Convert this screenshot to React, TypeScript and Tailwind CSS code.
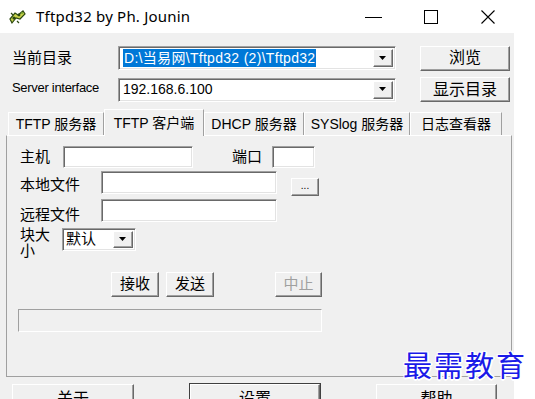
import React from 'react';

const sunken =
  'bg-white border border-t-[#a0a0a0] border-l-[#a0a0a0] border-b-white border-r-white shadow-[inset_1px_1px_0_#696969,inset_-1px_-1px_0_#e3e3e3]';
const raised =
  'bg-[#f0f0f0] border border-t-white border-l-white border-b-[#696969] border-r-[#696969] shadow-[inset_-1px_-1px_0_#a0a0a0]';

function Arrow() {
  return (
    <div className={`${raised} w-[20px] h-full flex items-center justify-center shrink-0`}>
      <svg width="8" height="5" viewBox="0 0 8 5">
        <path d="M0 0h7L3.5 4z" fill="#000" />
      </svg>
    </div>
  );
}

function Combo({ children, width }: { children: React.ReactNode; width: string }) {
  return (
    <div className={`${sunken} ${width} h-[24px] flex items-stretch p-[2px]`}>
      <div className="flex-1 flex items-center pl-[2px] text-[14px] overflow-hidden whitespace-nowrap">
        {children}
      </div>
      <Arrow />
    </div>
  );
}

function Btn({ children, className = '', disabled = false }: { children: React.ReactNode; className?: string; disabled?: boolean }) {
  return (
    <div
      className={`${raised} flex justify-center shrink-0 ${disabled ? 'text-[#a0a0a0]' : 'text-black'} ${className}`}
    >
      {children}
    </div>
  );
}

function Tab({ label, w, active = false }: { label: string; w: string; active?: boolean }) {
  return (
    <div
      className={`${w} flex items-center justify-center border-l border-t border-l-white border-t-white border-r border-r-[#a0a0a0] text-[14px] ${
        active ? 'h-[27px] bg-[#f0f0f0] -mb-px relative z-10 border-b-0' : 'h-[23px]'
      }`}
    >
      {label}
    </div>
  );
}

function TitleIcon() {
  return (
    <svg width="18" height="16" viewBox="0 0 18 16">
      <path d="M2 10 L7 4 L10 6 L15 2 L17 5 L12 10 L8 9 L4 14 Z" fill="#c9d44a" stroke="#2d4a12" strokeWidth="1.2" />
      <circle cx="6" cy="9" r="1.6" fill="#2d4a12" />
      <circle cx="11" cy="6" r="1.4" fill="#2d4a12" />
      <circle cx="14" cy="4" r="1" fill="#6fa02a" />
      <path d="M3 4 L5 6 M9 12 L11 14" stroke="#2d4a12" strokeWidth="1.2" />
    </svg>
  );
}

export default function App() {
  return (
    <div className="w-[535px] h-[399px] bg-white relative overflow-hidden font-['Liberation_Sans','Noto_Sans_CJK_SC',sans-serif] text-black">
      {/* title bar */}
      <div className="h-[33px] flex items-center">
        <div className="ml-[7px] w-[20px] flex justify-center">
          <TitleIcon />
        </div>
        <span className="ml-[9px] text-[15px] tracking-[0.2px] font-['Noto_Sans',sans-serif]">Tftpd32 by Ph. Jounin</span>
        <div className="ml-auto flex items-center mr-[40px]">
          <svg width="18" height="14" viewBox="0 0 18 14" className="mr-[41px]">
            <path d="M0 7.5h17" stroke="#000" strokeWidth="1" />
          </svg>
          <svg width="14" height="14" viewBox="0 0 14 14" className="mr-[43px]">
            <rect x="0.5" y="0.5" width="13" height="13" fill="none" stroke="#000" />
          </svg>
          <svg width="14" height="14" viewBox="0 0 14 14">
            <path d="M0.5 0.5L13.5 13.5M13.5 0.5L0.5 13.5" stroke="#000" strokeWidth="1.1" />
          </svg>
        </div>
      </div>

      {/* body */}
      <div className="w-[514px] h-[366px] bg-[#f0f0f0] flex flex-col [&>*]:shrink-0">
        <div className="flex items-center mt-[13px] pl-[12px] h-[24px]">
          <span className="w-[106px] text-[15px]">当前目录</span>
          <Combo width="w-[278px]">
            <span className="bg-[#0078d7] text-white px-px tracking-[0.3px]">D:\当易网\Tftpd32 (2)\Tftpd32</span>
          </Combo>
          <Btn className="ml-[24px] w-[90px] h-[25px] text-[16px] items-center">浏览</Btn>
        </div>
        <div className="flex items-center mt-[7px] pl-[12px] h-[25px]">
          <span className="w-[106px] text-[13px] tracking-[-0.3px] -mt-[4px]">Server interface</span>
          <Combo width="w-[278px]">192.168.6.100</Combo>
          <Btn className="ml-[24px] w-[90px] h-[25px] text-[16px] items-center">显示目录</Btn>
        </div>

        {/* tabs */}
        <div className="flex items-end ml-[8px] mt-[6px] h-[27px]">
          <Tab label="TFTP 服务器" w="w-[96px]" />
          <Tab label="TFTP 客户端" w="w-[100px]" active />
          <Tab label="DHCP 服务器" w="w-[100px]" />
          <Tab label="SYSlog 服务器" w="w-[106px]" />
          <Tab label="日志查看器" w="w-[92px]" />
        </div>

        {/* panel */}
        <div className="ml-[6px] w-[506px] h-[242px] border border-t-white border-l-[#a0a0a0] border-r-[#a0a0a0] border-b-[#a0a0a0] flex flex-col text-[15px] [&>*]:shrink-0">
          <div className="flex items-center mt-[10px] pl-[13px] h-[22px]">
            <span className="w-[43px]">主机</span>
            <div className={`${sunken} w-[130px] h-[22px]`} />
            <span className="ml-[39px] w-[40px]">端口</span>
            <div className={`${sunken} w-[43px] h-[22px]`} />
          </div>
          <div className="flex items-start mt-[3px] pl-[13px] h-[24px]">
            <span className="w-[81px] mt-[3px]">本地文件</span>
            <div className={`${sunken} w-[176px] h-[23px]`} />
            <Btn className="ml-[14px] mt-[7px] w-[28px] h-[18px] text-[10px] leading-none items-center pb-[2px]">...</Btn>
          </div>
          <div className="flex items-start mt-[4px] pl-[13px] h-[23px]">
            <span className="w-[81px] mt-[5px]">远程文件</span>
            <div className={`${sunken} w-[176px] h-[23px]`} />
          </div>
          <div className="flex items-start mt-[6px] pl-[13px] h-[32px]">
            <span className="w-[42px] leading-[16px] -mt-[1px]">
              块大
              <br />小
            </span>
            <div className={`${sunken} w-[74px] h-[23px] flex items-stretch p-[2px]`}>
              <div className="flex-1 flex items-center pl-[1px] text-[15px]">默认</div>
              <Arrow />
            </div>
          </div>
          <div className="flex items-center mt-[12px] h-[25px]">
            <Btn className="ml-[104px] w-[48px] h-[25px] text-[15px] items-center">接收</Btn>
            <Btn className="ml-[7px] w-[48px] h-[25px] text-[15px] items-center">发送</Btn>
            <Btn className="ml-[61px] w-[47px] h-[25px] text-[15px] items-center" disabled>
              中止
            </Btn>
          </div>
          <div className="ml-[11px] mt-[12px] w-[304px] h-[23px] border border-t-[#a0a0a0] border-l-[#a0a0a0] border-b-white border-r-white bg-[#f0f0f0]" />
        </div>

        {/* bottom buttons */}
        <div className="flex mt-[7px] h-[30px]">
          <Btn className="ml-[12px] w-[122px] h-[30px] text-[16px] items-start pt-[2px]">关于</Btn>
          <Btn className="ml-[56px] w-[130px] h-[30px] text-[16px] items-start pt-[2px] outline outline-1 outline-[#404040]">
            设置
          </Btn>
          <Btn className="ml-[56px] w-[121px] h-[30px] text-[16px] items-start pt-[2px]">帮助</Btn>
        </div>
      </div>

      {/* watermark */}
      <div className="absolute left-[403px] top-[350px] text-[29px] tracking-[2px] leading-none text-[#1a1ae8] font-['Noto_Sans_CJK_SC',serif] [text-shadow:1px_1px_0_#fff,-1px_-1px_0_#fff,1px_-1px_0_#fff,-1px_1px_0_#fff,0_2px_0_#fff,2px_0_0_#fff]">
        最需教育
      </div>
    </div>
  );
}
